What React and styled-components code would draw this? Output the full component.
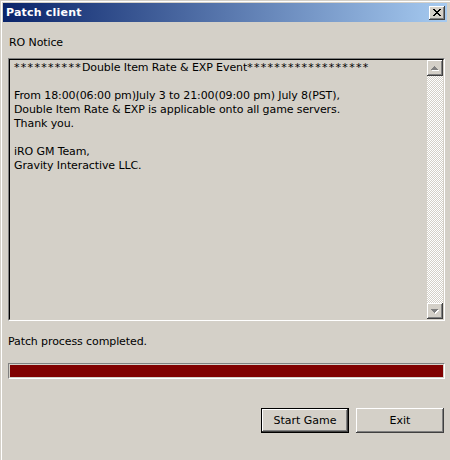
import styled, { createGlobalStyle } from "styled-components";

const GlobalStyle = createGlobalStyle`
  html, body {
    margin: 0;
    padding: 0;
    background: #d4d0c8;
  }
  body {
    font-family: "DejaVu Sans", "Liberation Sans", sans-serif;
    font-size: 11px;
    letter-spacing: -0.1px;
    color: #000;
  }
`;

const notice = `
From 18:00(06:00 pm)July 3 to 21:00(09:00 pm) July 8(PST),
Double Item Rate & EXP is applicable onto all game servers.
Thank you.

iRO GM Team,
Gravity Interactive LLC.`;

function CloseIcon() {
  return (
    <svg width="8" height="7" viewBox="0 0 8 7" shapeRendering="crispEdges">
      <path
        d="M0 0h2v1h-2zM6 0h2v1h-2zM1 1h2v1h-2zM5 1h2v1h-2zM2 2h4v1h-4zM3 3h2v1h-2zM2 4h4v1h-4zM1 5h2v1h-2zM5 5h2v1h-2zM0 6h2v1h-2zM6 6h2v1h-2z"
        fill="#000"
      />
    </svg>
  );
}

function Arrow({ down }) {
  const d = down ? "M0 0h7v1h-7zM1 1h5v1h-5zM2 2h3v1h-3zM3 3h1v1h-1z" : "M3 0h1v1h-1zM2 1h3v1h-3zM1 2h5v1h-5zM0 3h7v1h-7z";
  return (
    <svg width="8" height="5" viewBox="0 0 8 5" shapeRendering="crispEdges">
      <path d={d} fill="#fff" transform="translate(1 1)" />
      <path d={d} fill="#808080" />
    </svg>
  );
}

function App() {
  return (
    <>
      <GlobalStyle />
      <Frame>
        <TitleBar>
          <Title>Patch client</Title>
          <CloseButton>
            <CloseIcon />
          </CloseButton>
        </TitleBar>
        <Body>
          <Label>RO Notice</Label>
          <NoticeBox>
            <NoticeText>
              <Stars>**********</Stars>Double Item Rate &amp; EXP Event
              <Stars>******************</Stars>
              {"\n"}
              {notice}
            </NoticeText>
            <ScrollBar>
              <ScrollButton>
                <Arrow />
              </ScrollButton>
              <Track />
              <ScrollButton>
                <Arrow down />
              </ScrollButton>
            </ScrollBar>
          </NoticeBox>
          <Status>Patch process completed.</Status>
          <Progress>
            <ProgressFill style={{ width: "100%" }} />
          </Progress>
          <Buttons>
            <Button $default>Start Game</Button>
            <Button>Exit</Button>
          </Buttons>
        </Body>
      </Frame>
    </>
  );
}

const Frame = styled.div`
  width: 450px;
  height: 460px;
  box-sizing: border-box;
  padding: 3px 3px 0 3px;
  box-shadow: inset 1px 1px 0 #d4d0c8, inset 2px 2px 0 #fff;
  overflow: hidden;
`;

const TitleBar = styled.div`
  height: 19px;
  display: flex;
  align-items: center;
  justify-content: space-between;
  padding: 0 2px 0 3px;
  background: linear-gradient(to right, #0a246a, #a6caf0);
`;

const Title = styled.span`
  color: #fff;
  font-weight: bold;
  font-size: 11px;
  line-height: 13px;
  letter-spacing: 0.2px;
`;

const CloseButton = styled.div`
  width: 16px;
  height: 14px;
  box-sizing: border-box;
  display: flex;
  align-items: center;
  justify-content: center;
  background: #d4d0c8;
  box-shadow: inset -1px -1px 0 #404040, inset 1px 1px 0 #fff,
    inset -2px -2px 0 #808080;
`;

const Body = styled.div`
  display: flex;
  flex-direction: column;
  padding: 0 2px 0 5px;
`;

const Label = styled.div`
  margin: 14px 0 0 1px;
  line-height: 14px;
`;

const NoticeBox = styled.div`
  margin-top: 8px;
  height: 263px;
  box-sizing: border-box;
  display: flex;
  border-style: solid;
  border-width: 1px;
  border-color: #808080 #fff #fff #808080;
`;

const NoticeText = styled.div`
  flex: 1;
  white-space: pre-wrap;
  line-height: 14px;
  padding: 1px 4px;
  border-top: 1px solid #000;
  border-left: 1px solid #000;
  border-bottom: 1px solid #d4d0c8;
`;

const Stars = styled.span`
  letter-spacing: 1.3px;
`;

const ScrollBar = styled.div`
  width: 16px;
  display: flex;
  flex-direction: column;
  border-top: 1px solid #000;
  border-right: 1px solid #d4d0c8;
  border-bottom: 1px solid #d4d0c8;
`;

const ScrollButton = styled.div`
  height: 16px;
  box-sizing: border-box;
  display: flex;
  align-items: center;
  justify-content: center;
  background: #d4d0c8;
  box-shadow: inset -1px -1px 0 #404040, inset 1px 1px 0 #fff,
    inset -2px -2px 0 #808080;
`;

const Track = styled.div`
  flex: 1;
  background: repeating-conic-gradient(#fff 0 25%, #d4d0c8 0 50%) 0 0 / 2px 2px;
`;

const Status = styled.div`
  margin-top: 14px;
  line-height: 14px;
`;

const Progress = styled.div`
  margin-top: 14px;
  height: 16px;
  box-sizing: border-box;
  padding: 1px;
  border-style: solid;
  border-width: 1px;
  border-color: #808080 #fff #fff #808080;
`;

const ProgressFill = styled.div`
  height: 100%;
  background: #800000;
`;

const Buttons = styled.div`
  margin-top: 29px;
  display: flex;
  justify-content: flex-end;
  gap: 7px;
  padding-right: 1px;
`;

const Button = styled.button`
  width: 88px;
  height: 25px;
  box-sizing: border-box;
  padding: 0;
  font: inherit;
  color: #000;
  background: #d4d0c8;
  border: ${(p) => (p.$default ? "1px solid #000" : "none")};
  box-shadow: inset -1px -1px 0 #404040, inset 1px 1px 0 #fff,
    inset -2px -2px 0 #808080;
`;

export default App;
